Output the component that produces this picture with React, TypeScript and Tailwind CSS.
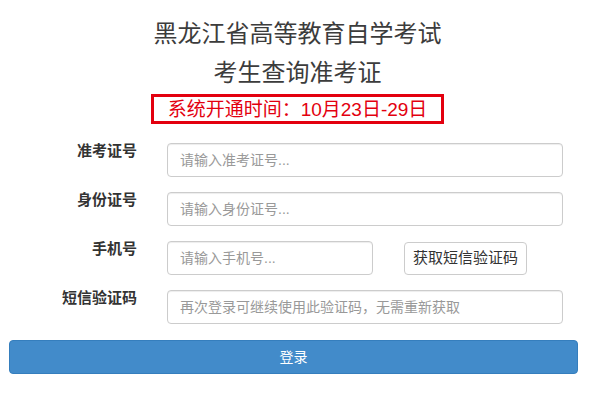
import React from 'react';

const font = { fontFamily: '"Liberation Sans", "Noto Sans CJK SC", sans-serif' };

function Row({ label, children }: { label: string; children: React.ReactNode }) {
  return (
    <div className="flex h-[34px] items-start">
      <label className="w-[128px] shrink-0 pt-0 text-right text-[15px] font-bold leading-[16px] text-[#333]">
        {label}
      </label>
      <div className="ml-[30px] flex items-center">{children}</div>
    </div>
  );
}

export default function App() {
  const inputCls =
    'h-[34px] rounded-[4px] border border-[#ccc] bg-white px-[12px] text-[14px] text-[#555] outline-none placeholder:text-[#999] shadow-[inset_0_1px_1px_rgba(0,0,0,0.075)]';

  return (
    <div className="min-h-[401px] w-[595px] bg-white" style={font}>
      {/* 标题 */}
      <div className="flex flex-col items-center pt-[14px]">
        <h1 className="text-[24px] font-normal leading-[39px] text-[#3c3c3c]">黑龙江省高等教育自学考试</h1>
        <h2 className="text-[24px] font-normal leading-[39px] text-[#3c3c3c]">考生查询准考证</h2>
        <div className="mt-[2px] flex h-[30px] w-[293px] items-center justify-center border-[3px] border-[#e3000f] text-[19px] leading-none text-[#e3000f]">
          系统开通时间：10月23日-29日
        </div>
      </div>

      {/* 表单 */}
      <div className="ml-[9px] mt-[19px] flex w-[569px] flex-col gap-[15px]">
        <Row label="准考证号">
          <input className={`${inputCls} w-[396px]`} placeholder="请输入准考证号..." />
        </Row>
        <Row label="身份证号">
          <input className={`${inputCls} w-[396px]`} placeholder="请输入身份证号..." />
        </Row>
        <Row label="手机号">
          <input className={`${inputCls} w-[206px]`} placeholder="请输入手机号..." />
          <button className="ml-[31px] h-[33px] w-[123px] rounded-[4px] border border-[#ccc] bg-white text-[15px] text-[#333]">
            获取短信验证码
          </button>
        </Row>
        <Row label="短信验证码">
          <input className={`${inputCls} w-[396px]`} placeholder="再次登录可继续使用此验证码，无需重新获取" />
        </Row>
        <button className="mt-[1px] h-[34px] w-[569px] rounded-[4px] border border-[#357ebd] bg-[#428bca] text-[14px] text-white">
          登录
        </button>
      </div>
    </div>
  );
}
